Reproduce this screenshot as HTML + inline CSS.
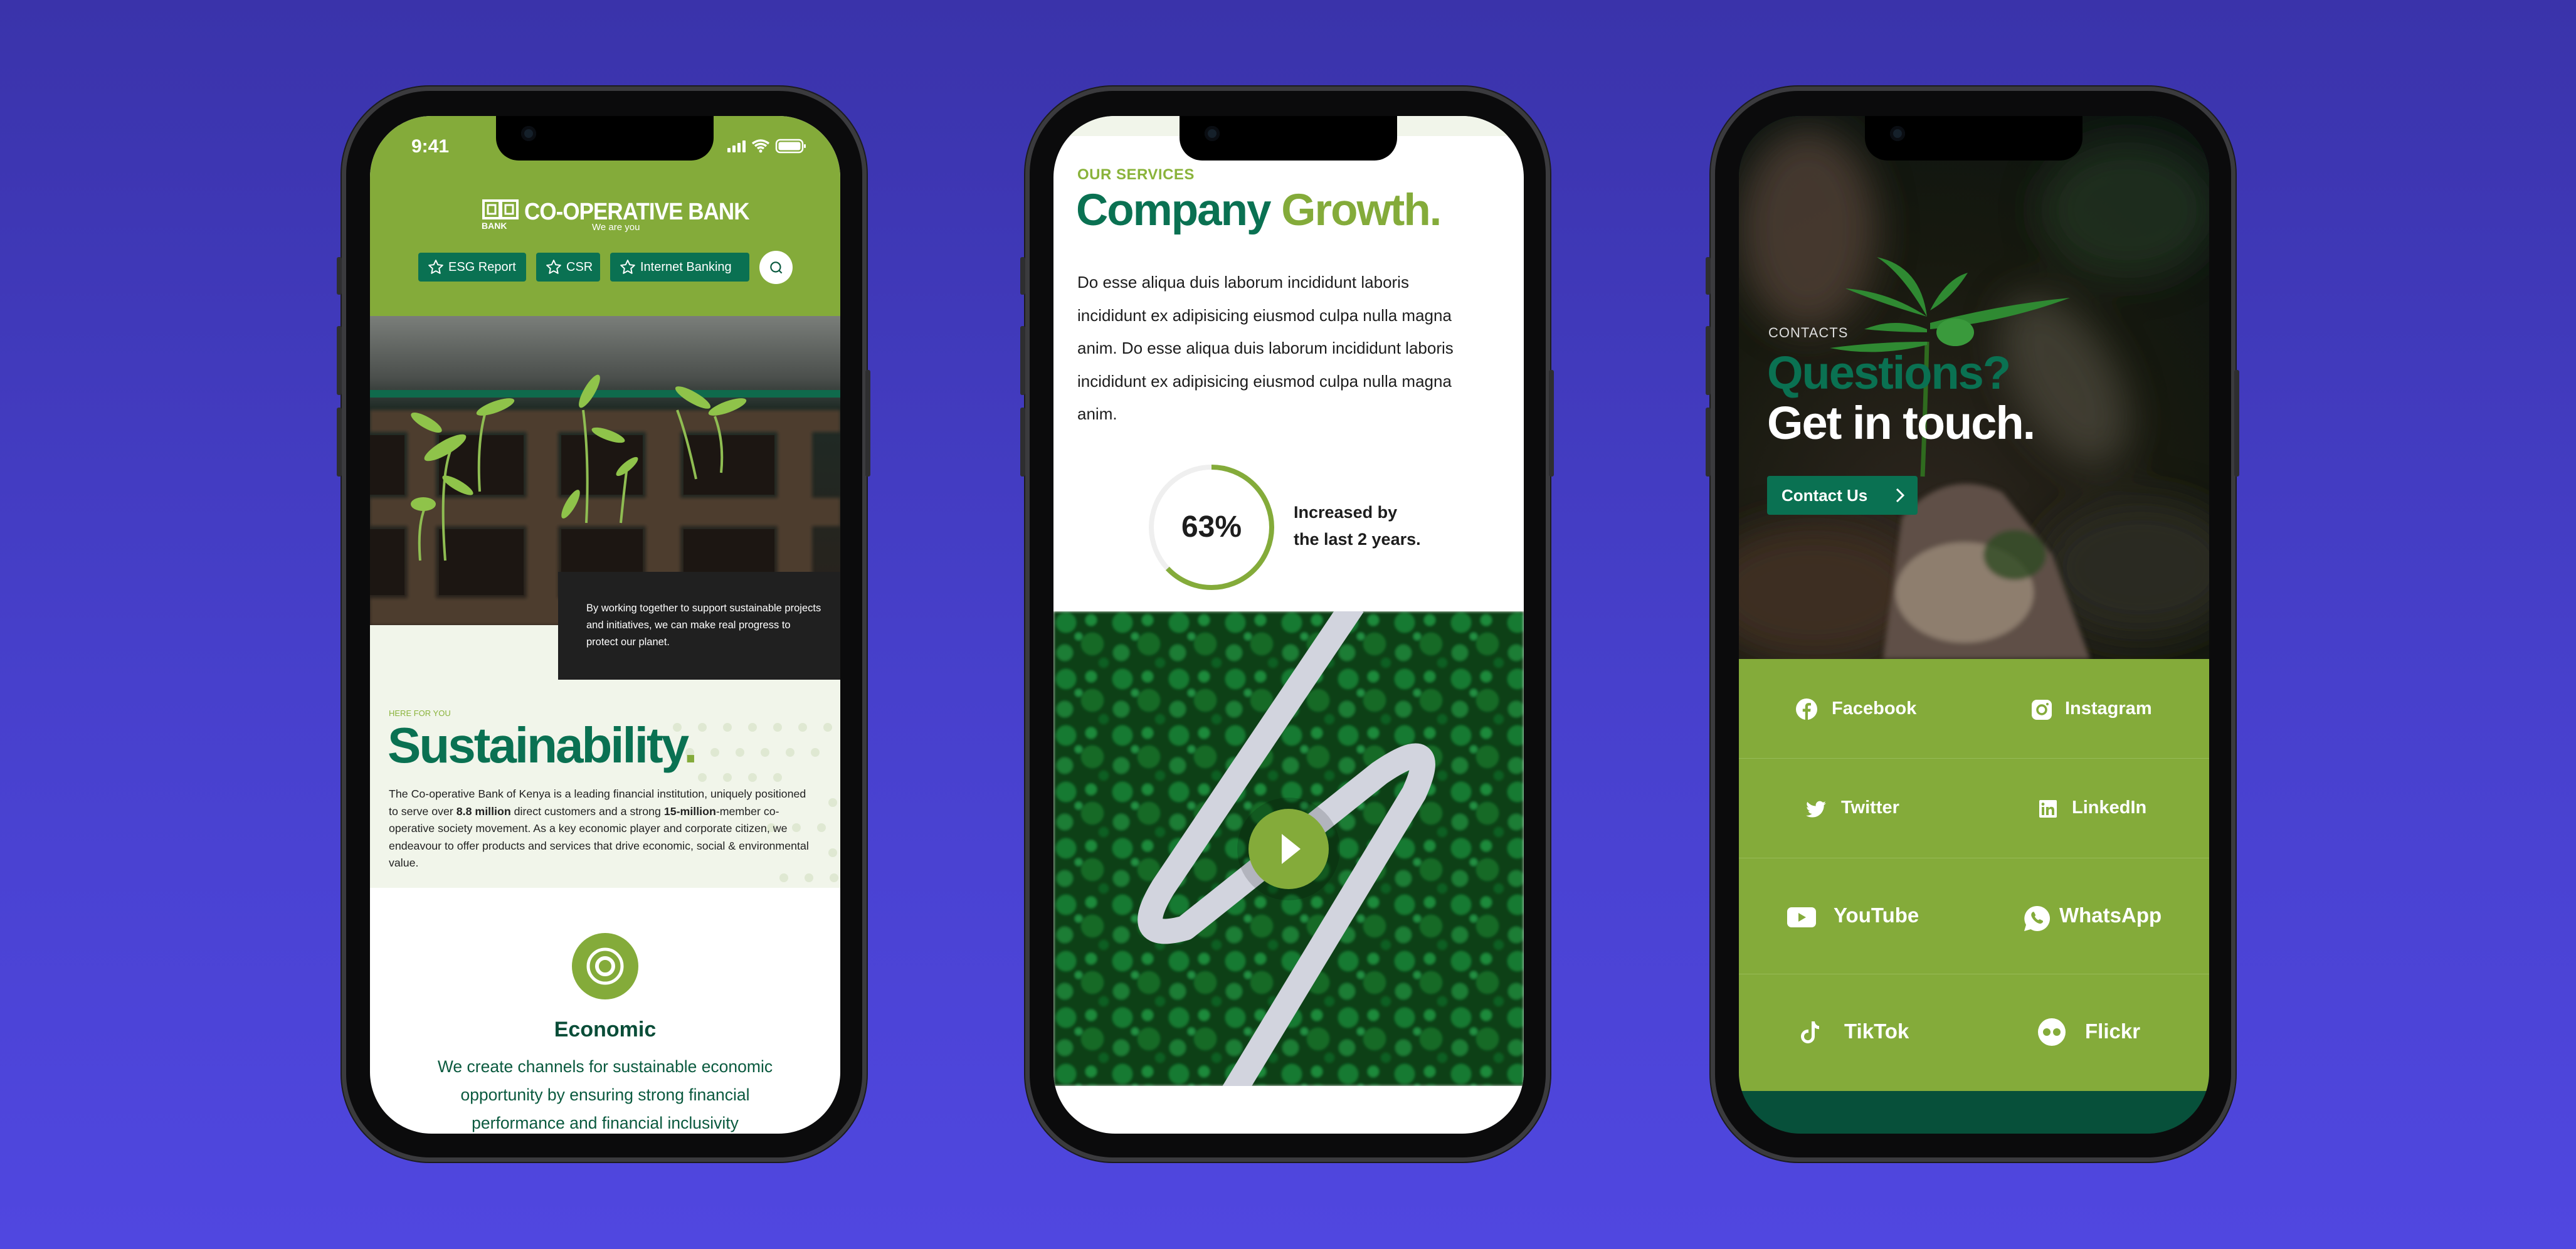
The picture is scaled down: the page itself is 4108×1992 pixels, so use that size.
<!DOCTYPE html>
<html><head><meta charset="utf-8"><style>
*{margin:0;padding:0;box-sizing:border-box}
body{width:4108px;height:1992px;overflow:hidden;background:linear-gradient(180deg,#3a33aa 0%,#4740cc 55%,#5047e0 100%);font-family:"Liberation Sans",sans-serif;position:relative}
.phone{position:absolute;top:138px;width:837px;height:1715px;border-radius:140px;background:#0b0b0c;border:7px solid #3b3b3e;box-shadow:0 0 0 2px #1c1c1e}
.btn-side{position:absolute;background:#2e2e30;width:8px;border-radius:3px}
.screen{position:absolute;left:38px;top:40px;width:750px;height:1623px;border-radius:98px;overflow:hidden;background:#fff}
.notch{position:absolute;left:201px;top:0;width:347px;height:71px;background:#000;border-radius:0 0 36px 36px;z-index:10}
.cam{position:absolute;left:40px;top:16px;width:24px;height:24px;border-radius:50%;background:#15202a;box-shadow:inset 0 0 0 5px #0a0d12}
.abs{position:absolute}
</style></head><body>

<!-- PHONE 1 -->
<div class="phone" style="left:545px">
<div class="screen">
 <div class="abs" style="left:0;top:0;width:750px;height:319px;background:#84ab3a"></div>
 <div class="notch"><div class="cam"></div></div>
 <div class="abs" style="left:66px;top:32px;color:#fff;font-weight:bold;font-size:30px">9:41</div>
 <svg class="abs" style="left:568px;top:34px" width="130" height="28" viewBox="0 0 130 28">
  <rect x="2" y="17" width="5" height="7" rx="1" fill="#fff"/><rect x="10" y="13" width="5" height="11" rx="1" fill="#fff"/><rect x="18" y="9" width="5" height="15" rx="1" fill="#fff"/><rect x="26" y="5" width="5" height="19" rx="1" fill="#fff"/>
  <path d="M42 10 Q55 0 68 10 M46 14 Q55 7 64 14 M50 18 Q55 14 60 18" stroke="#fff" stroke-width="3.5" fill="none"/><circle cx="55" cy="22" r="2.5" fill="#fff"/>
  <rect x="80" y="4" width="42" height="20" rx="6" fill="none" stroke="#fff" stroke-width="2.5"/><rect x="83.5" y="7.5" width="35" height="13" rx="3" fill="#fff"/><rect x="124" y="11" width="3" height="6" rx="1" fill="#fff"/>
 </svg>
 <svg class="abs" style="left:178px;top:132px" width="62" height="50" viewBox="0 0 62 50">
  <rect x="3" y="3" width="26" height="28" fill="none" stroke="#fff" stroke-width="4"/><rect x="31" y="3" width="26" height="28" fill="none" stroke="#fff" stroke-width="4"/>
  <rect x="10" y="10" width="12" height="14" fill="none" stroke="#fff" stroke-width="3"/><rect x="38" y="10" width="12" height="14" fill="none" stroke="#fff" stroke-width="3"/>
  <text x="0" y="48" font-size="14" font-weight="bold" fill="#fff" font-family="Liberation Sans">BANK</text>
 </svg>
 <div class="abs" style="left:246px;top:132px;color:#fff;font-size:38px;letter-spacing:-1px;font-weight:bold;transform:scaleX(0.92);transform-origin:left">CO-OPERATIVE BANK</div>
 <div class="abs" style="left:354px;top:169px;color:#fff;font-size:15px">We are you</div>
 <div class="abs" style="left:77px;top:218px;width:172px;height:46px;background:#0a7152;border-radius:4px;color:#fff;font-size:20px;line-height:46px;padding-left:48px">ESG Report</div>
 <div class="abs" style="left:265px;top:218px;width:102px;height:46px;background:#0a7152;border-radius:4px;color:#fff;font-size:20px;line-height:46px;padding-left:48px">CSR</div>
 <div class="abs" style="left:383px;top:218px;width:222px;height:46px;background:#0a7152;border-radius:4px;color:#fff;font-size:20px;line-height:46px;padding-left:48px">Internet Banking</div>
 <svg class="abs" style="left:92px;top:228px" width="26" height="26" viewBox="0 0 24 24"><path d="M12 2l3 6.5 7 .8-5.2 4.8 1.4 7L12 17.6 5.8 21.1l1.4-7L2 9.3l7-.8z" fill="none" stroke="#fff" stroke-width="1.8" stroke-linejoin="round"/></svg>
 <svg class="abs" style="left:280px;top:228px" width="26" height="26" viewBox="0 0 24 24"><path d="M12 2l3 6.5 7 .8-5.2 4.8 1.4 7L12 17.6 5.8 21.1l1.4-7L2 9.3l7-.8z" fill="none" stroke="#fff" stroke-width="1.8" stroke-linejoin="round"/></svg>
 <svg class="abs" style="left:398px;top:228px" width="26" height="26" viewBox="0 0 24 24"><path d="M12 2l3 6.5 7 .8-5.2 4.8 1.4 7L12 17.6 5.8 21.1l1.4-7L2 9.3l7-.8z" fill="none" stroke="#fff" stroke-width="1.8" stroke-linejoin="round"/></svg>
 <div class="abs" style="left:621px;top:215px;width:53px;height:53px;border-radius:50%;background:#fff"></div>
 <svg class="abs" style="left:635px;top:229px" width="26" height="26" viewBox="0 0 24 24"><circle cx="11" cy="11" r="7" fill="none" stroke="#0a5a40" stroke-width="2"/><path d="M16 16l4 4" stroke="#0a5a40" stroke-width="2"/></svg>
 <svg class="abs" style="left:0;top:319px" width="750" height="493" viewBox="0 0 750 493">
  <defs>
   <linearGradient id="sg" x1="0" y1="0" x2="0" y2="1"><stop offset="0" stop-color="#7a7e7a"/><stop offset="0.2" stop-color="#4b4f4c"/><stop offset="0.3" stop-color="#1e2a25"/><stop offset="1" stop-color="#2a211b"/></linearGradient>
   <filter id="bl"><feGaussianBlur stdDeviation="3"/></filter>
  </defs>
  <rect width="750" height="493" fill="url(#sg)"/>
  <rect x="0" y="118" width="750" height="12" fill="#0f6a4c"/>
  <g fill="#4e3c2e" filter="url(#bl)">
   <rect x="0" y="150" width="750" height="35"/><rect x="0" y="290" width="750" height="45"/><rect x="0" y="450" width="750" height="43"/>
   <rect x="60" y="150" width="45" height="343"/><rect x="250" y="150" width="50" height="343"/><rect x="440" y="150" width="55" height="343"/><rect x="650" y="150" width="55" height="343"/>
  </g>
  <g fill="#1c1612"><rect x="110" y="190" width="135" height="95"/><rect x="305" y="190" width="130" height="95"/><rect x="500" y="190" width="145" height="95"/><rect x="0" y="190" width="55" height="95"/><rect x="110" y="340" width="135" height="105"/><rect x="305" y="340" width="130" height="105"/><rect x="500" y="340" width="145" height="105"/><rect x="0" y="340" width="55" height="105"/></g>
  <g stroke="#8fbd52" stroke-width="4" fill="none"><path d="M120 390 Q110 260 130 210"/><path d="M175 280 Q170 200 185 150"/><path d="M345 330 Q350 230 340 150"/><path d="M520 260 Q505 190 490 150"/><path d="M400 330 Q405 280 410 240"/><path d="M560 250 Q565 200 550 160"/><path d="M80 390 Q75 330 90 300"/></g>
  <g fill="#8fc34a"><ellipse cx="120" cy="210" rx="38" ry="11" transform="rotate(-30 120 210)"/><ellipse cx="200" cy="145" rx="32" ry="9" transform="rotate(-20 200 145)"/><ellipse cx="90" cy="170" rx="28" ry="9" transform="rotate(30 90 170)"/><ellipse cx="350" cy="120" rx="30" ry="9" transform="rotate(-60 350 120)"/><ellipse cx="380" cy="190" rx="28" ry="8" transform="rotate(20 380 190)"/><ellipse cx="515" cy="130" rx="32" ry="9" transform="rotate(30 515 130)"/><ellipse cx="570" cy="145" rx="32" ry="9" transform="rotate(-20 570 145)"/><ellipse cx="410" cy="240" rx="22" ry="7" transform="rotate(-40 410 240)"/><ellipse cx="320" cy="300" rx="26" ry="8" transform="rotate(-60 320 300)"/><ellipse cx="85" cy="300" rx="20" ry="11"/><ellipse cx="140" cy="270" rx="28" ry="8" transform="rotate(30 140 270)"/></g>
 </svg>
 <div class="abs" style="left:0;top:812px;width:750px;height:419px;background:#f1f5ea"></div>
 <svg class="abs" style="left:420px;top:935px" width="330" height="300"><g fill="#dfe8d2">
  <circle cx="70" cy="40" r="7"/><circle cx="110" cy="40" r="7"/><circle cx="150" cy="40" r="7"/><circle cx="190" cy="40" r="7"/><circle cx="230" cy="40" r="7"/><circle cx="270" cy="40" r="7"/><circle cx="310" cy="40" r="7"/>
  <circle cx="90" cy="80" r="7"/><circle cx="130" cy="80" r="7"/><circle cx="170" cy="80" r="7"/><circle cx="210" cy="80" r="7"/><circle cx="250" cy="80" r="7"/><circle cx="290" cy="80" r="7"/>
  <circle cx="110" cy="120" r="7"/><circle cx="150" cy="120" r="7"/><circle cx="190" cy="120" r="7"/><circle cx="230" cy="120" r="7"/>
  <circle cx="318" cy="160" r="7"/><circle cx="220" cy="200" r="7"/><circle cx="260" cy="200" r="7"/><circle cx="300" cy="200" r="7"/><circle cx="318" cy="240" r="7"/><circle cx="240" cy="280" r="7"/><circle cx="280" cy="280" r="7"/><circle cx="320" cy="280" r="7"/></g></svg>
 <div class="abs" style="left:300px;top:727px;width:450px;height:172px;background:#202020"></div>
 <div class="abs" style="left:345px;top:772px;width:375px;color:#fff;font-size:16.5px;line-height:27px">By working together to support sustainable projects and initiatives, we can make real progress to protect our planet.</div>
 <div class="abs" style="left:30px;top:945px;color:#8ab33b;font-size:13px">HERE FOR YOU</div>
 <div class="abs" style="left:28px;top:958px;color:#0a7152;font-size:80px;font-weight:bold;letter-spacing:-3px">Sustainability<span style="color:#84ab3a">.</span></div>
 <div class="abs" style="left:30px;top:1068px;width:670px;color:#222;font-size:17.8px;line-height:27.5px">The Co-operative Bank of Kenya is a leading financial institution, uniquely positioned to serve over <b>8.8 million</b> direct customers and a strong <b>15-million</b>-member co-operative society movement. As a key economic player and corporate citizen, we endeavour to offer products and services that drive economic, social &amp; environmental value.</div>
 <svg class="abs" style="left:322px;top:1303px" width="106" height="106" viewBox="0 0 106 106"><circle cx="53" cy="53" r="53" fill="#84ab3a"/><circle cx="53" cy="53" r="27" fill="none" stroke="#fff" stroke-width="5"/><circle cx="53" cy="53" r="13" fill="none" stroke="#fff" stroke-width="6"/></svg>
 <div class="abs" style="left:0;top:1438px;width:750px;text-align:center;color:#0a4d38;font-size:34px;font-weight:bold">Economic</div>
 <div class="abs" style="left:95px;top:1494px;width:560px;text-align:center;color:#0b5a3f;font-size:26.5px;line-height:45px">We create channels for sustainable economic opportunity by ensuring strong financial performance and financial inclusivity</div>
</div></div>

<!-- PHONE 2 -->
<div class="phone" style="left:1635px">
<div class="screen">
 <div class="abs" style="left:0;top:0;width:750px;height:32px;background:#f1f5ea"></div>
 <div class="notch"><div class="cam"></div></div>
 <div class="abs" style="left:38px;top:80px;color:#8ab33b;font-size:24px;font-weight:bold;letter-spacing:0.5px">OUR SERVICES</div>
 <div class="abs" style="left:36px;top:110px;color:#0a7152;font-size:71px;font-weight:bold;letter-spacing:-2px">Company <span style="color:#84ab3a">Growth.</span></div>
 <div class="abs" style="left:38px;top:239px;width:630px;color:#1d1d1d;font-size:26px;line-height:52.5px">Do esse aliqua duis laborum incididunt laboris incididunt ex adipisicing eiusmod culpa nulla magna anim. Do esse aliqua duis laborum incididunt laboris incididunt ex adipisicing eiusmod culpa nulla magna anim.</div>
 <svg class="abs" style="left:148px;top:552px" width="208" height="208" viewBox="0 0 208 208">
  <circle cx="104" cy="104" r="96" fill="none" stroke="#efefef" stroke-width="8"/>
  <circle cx="104" cy="104" r="96" fill="none" stroke="#84ab3a" stroke-width="8" stroke-dasharray="380 603" transform="rotate(-90 104 104)"/>
 </svg>
 <div class="abs" style="left:148px;top:628px;width:208px;text-align:center;color:#1d1d1d;font-size:48px;font-weight:bold">63%</div>
 <div class="abs" style="left:383px;top:611px;color:#1d1d1d;font-size:27px;font-weight:bold;line-height:43px">Increased by<br>the last 2 years.</div>
 <svg class="abs" style="left:0;top:790px" width="750" height="757" viewBox="0 0 750 757">
  <defs>
   <pattern id="tr" width="90" height="90" patternUnits="userSpaceOnUse">
    <rect width="90" height="90" fill="#0a3f16"/>
    <circle cx="20" cy="18" r="16" fill="#187a30"/><circle cx="62" cy="52" r="18" fill="#126a28"/><circle cx="60" cy="14" r="9" fill="#1d8a3a"/><circle cx="18" cy="66" r="13" fill="#1a7d34"/><circle cx="80" cy="82" r="8" fill="#0f5e22"/><circle cx="40" cy="40" r="6" fill="#229042"/>
   </pattern>
   <filter id="b2"><feGaussianBlur stdDeviation="2"/></filter>
  </defs>
  <rect width="750" height="757" fill="url(#tr)" filter="url(#b2)"/>
  <path d="M478 -10 L175 440 Q120 530 210 505 L520 258 Q620 190 575 290 L285 770" fill="none" stroke="#d2d4de" stroke-width="40" stroke-linejoin="round"/>
  <circle cx="375" cy="379" r="82" fill="#000" opacity="0.15"/>
  <circle cx="375" cy="379" r="64" fill="#84ab3a"/>
  <path d="M364 355 L394 379 L364 403 Z" fill="#fff"/>
 </svg>
</div></div>

<!-- PHONE 3 -->
<div class="phone" style="left:2728px">
<div class="screen" style="background:#07503a">
 <svg class="abs" style="left:0;top:0" width="750" height="866" viewBox="0 0 750 866">
  <defs>
   <radialGradient id="bg3" cx="0.4" cy="0.8" r="0.9"><stop offset="0" stop-color="#2e261f"/><stop offset="0.6" stop-color="#17190f"/><stop offset="1" stop-color="#0d1410"/></radialGradient>
   <filter id="bb"><feGaussianBlur stdDeviation="30"/></filter>
   <filter id="bs"><feGaussianBlur stdDeviation="4"/></filter>
  </defs>
  <rect width="750" height="866" fill="url(#bg3)"/>
  <g filter="url(#bb)">
   <ellipse cx="110" cy="180" rx="110" ry="160" fill="#5a463a" opacity="0.7"/>
   <ellipse cx="620" cy="150" rx="140" ry="110" fill="#2a3a2a" opacity="0.6"/>
   <ellipse cx="520" cy="420" rx="80" ry="150" fill="#6a6458" opacity="0.45" transform="rotate(-30 520 420)"/>
   <ellipse cx="120" cy="760" rx="180" ry="110" fill="#3e2e22"/>
   <ellipse cx="640" cy="720" rx="160" ry="110" fill="#2a2a20"/>
  </g>
  <g filter="url(#bs)">
   <path d="M230 866 L260 640 Q330 560 420 600 L500 700 L560 866Z" fill="#5e5046"/>
   <ellipse cx="360" cy="760" rx="110" ry="80" fill="#9a8a78" opacity="0.8"/>
   <ellipse cx="440" cy="700" rx="50" ry="40" fill="#2f4a22" opacity="0.8"/>
  </g>
  <path d="M293 575 Q298 450 300 360" stroke="#2f6b1f" stroke-width="7" fill="none"/>
  <g fill="#2f8a32">
   <path d="M300 320 Q240 280 170 275 Q230 300 300 320Z"/>
   <path d="M300 320 Q260 250 220 225 Q290 240 300 320Z"/>
   <path d="M305 310 Q330 260 365 250 Q340 290 305 310Z"/>
   <path d="M305 330 Q420 300 528 290 Q420 330 305 340Z"/>
   <path d="M300 340 Q250 320 200 340 Q250 345 300 345Z"/>
   <path d="M300 360 Q220 360 145 370 Q220 385 300 365Z"/>
   <ellipse cx="345" cy="345" rx="30" ry="22" fill="#3a9a3c"/>
  </g>
 </svg>
 <div class="notch"><div class="cam"></div></div>
 <div class="abs" style="left:47px;top:333px;color:#ddd;font-size:22px;letter-spacing:1px">CONTACTS</div>
 <div class="abs" style="left:45px;top:370px;color:#0a7152;font-size:74px;font-weight:bold;letter-spacing:-2px;line-height:80px">Questions?</div>
 <div class="abs" style="left:45px;top:450px;color:#fff;font-size:74px;font-weight:bold;letter-spacing:-2px;line-height:80px">Get in touch.</div>
 <div class="abs" style="left:45px;top:574px;width:240px;height:62px;background:#0a7152;border-radius:4px;color:#fff;font-size:26px;font-weight:bold;line-height:62px;padding-left:23px">Contact Us</div>
 <svg class="abs" style="left:246px;top:592px" width="22" height="26" viewBox="0 0 22 26"><path d="M6 3l10 10-10 10" stroke="#fff" stroke-width="3" fill="none"/></svg>
 <div class="abs" style="left:0;top:866px;width:750px;height:689px;background:#84ab3a"></div>
 <div class="abs" style="left:0;top:1024px;width:750px;height:1px;background:#97bb58"></div>
 <div class="abs" style="left:0;top:1183px;width:750px;height:1px;background:#97bb58"></div>
 <div class="abs" style="left:0;top:1368px;width:750px;height:1px;background:#97bb58"></div>
 <div style="position:absolute;left:0;top:0;color:#fff;font-weight:bold">
  <div class="abs" style="left:148px;top:929px;font-size:29px">Facebook</div>
  <div class="abs" style="left:520px;top:929px;font-size:29px">Instagram</div>
  <div class="abs" style="left:163px;top:1087px;font-size:29px">Twitter</div>
  <div class="abs" style="left:531px;top:1087px;font-size:29px">LinkedIn</div>
  <div class="abs" style="left:151px;top:1256px;font-size:33px">YouTube</div>
  <div class="abs" style="left:511px;top:1256px;font-size:33px">WhatsApp</div>
  <div class="abs" style="left:168px;top:1441px;font-size:33px">TikTok</div>
  <div class="abs" style="left:552px;top:1441px;font-size:33px">Flickr</div>
 </div>
 <svg class="abs" style="left:90px;top:928px" width="36" height="36" viewBox="0 0 36 36"><circle cx="18" cy="18" r="17" fill="#fff"/><path d="M20 36V22h4l.6-4.5H20v-3c0-1.3.4-2.2 2.2-2.2H25V8.3c-.5-.1-2-.2-3.6-.2-3.6 0-5.6 2.2-5.6 6v3.4h-4V22h4v14z" fill="#84ab3a"/></svg>
 <svg class="abs" style="left:466px;top:930px" width="34" height="34" viewBox="0 0 34 34"><rect x="1" y="1" width="32" height="32" rx="8" fill="#fff"/><circle cx="17" cy="17" r="7" fill="none" stroke="#84ab3a" stroke-width="3.5"/><circle cx="26" cy="8" r="2" fill="#84ab3a"/></svg>
 <svg class="abs" style="left:107px;top:1092px" width="32" height="28" viewBox="0 0 24 20"><path d="M24 2.3a10 10 0 0 1-2.8.8A5 5 0 0 0 23.3.4a10 10 0 0 1-3.1 1.2A4.9 4.9 0 0 0 11.8 6 14 14 0 0 1 1.7.9a4.9 4.9 0 0 0 1.5 6.6A4.9 4.9 0 0 1 1 6.9a4.9 4.9 0 0 0 3.9 4.8 5 5 0 0 1-2.2.1 4.9 4.9 0 0 0 4.6 3.4A9.9 9.9 0 0 1 0 17.2 14 14 0 0 0 7.5 19.4c9.1 0 14-7.5 14-14v-.6A10 10 0 0 0 24 2.3z" fill="#fff"/></svg>
 <svg class="abs" style="left:478px;top:1090px" width="30" height="30" viewBox="0 0 30 30"><rect x="1" y="1" width="28" height="28" rx="2" fill="#fff"/><rect x="5" y="12" width="4" height="13" fill="#84ab3a"/><circle cx="7" cy="7.5" r="2.4" fill="#84ab3a"/><path d="M12 12h4v2c1-1.6 2.5-2.3 4.3-2.3 3 0 4.7 1.8 4.7 5.5V25h-4v-7c0-1.8-.7-2.8-2.2-2.8S16 16.3 16 18v7h-4z" fill="#84ab3a"/></svg>
 <svg class="abs" style="left:77px;top:1262px" width="46" height="32" viewBox="0 0 46 32"><rect x="0" y="0" width="46" height="32" rx="7" fill="#fff"/><path d="M18 9l12 7-12 7z" fill="#84ab3a"/></svg>
 <svg class="abs" style="left:453px;top:1258px" width="44" height="44" viewBox="0 0 44 44"><path d="M22 2a20 20 0 0 0-17 30L2 42l10.5-3A20 20 0 1 0 22 2z" fill="#fff"/><path d="M15 12c1-1 2.5-1 3 0l2 4c.4 1-.5 2-1.2 2.7 1.2 2.5 3.3 4.6 5.8 5.8.7-.7 1.600-1.6 2.7-1.2l4 2c1 .5 1 2 0 3-2 2.2-4.6 2.4-8 .6-3.5-1.8-7-5.3-8.8-8.8-1.8-3.4-1.6-6 .5-8.1z" fill="#84ab3a"/></svg>
 <svg class="abs" style="left:98px;top:1443px" width="34" height="38" viewBox="0 0 34 38"><path d="M18 1h5c.3 4 3 7 7 7.3v5c-2.6 0-5-.8-7-2.2V25a11 11 0 1 1-11-11h1v5.2a6 6 0 1 0 5 5.8z" fill="#fff"/></svg>
 <svg class="abs" style="left:477px;top:1439px" width="44" height="44" viewBox="0 0 44 44"><circle cx="22" cy="22" r="22" fill="#fff"/><circle cx="14" cy="22" r="6" fill="#84ab3a"/><circle cx="30" cy="22" r="6" fill="#84ab3a"/></svg>
</div></div>

<div class="btn-side" style="left:537px;top:410px;height:60px"></div>
<div class="btn-side" style="left:537px;top:520px;height:110px"></div>
<div class="btn-side" style="left:537px;top:650px;height:110px"></div>
<div class="btn-side" style="left:1380px;top:590px;height:170px"></div>
<div class="btn-side" style="left:1627px;top:410px;height:60px"></div>
<div class="btn-side" style="left:1627px;top:520px;height:110px"></div>
<div class="btn-side" style="left:1627px;top:650px;height:110px"></div>
<div class="btn-side" style="left:2470px;top:590px;height:170px"></div>
<div class="btn-side" style="left:2720px;top:410px;height:60px"></div>
<div class="btn-side" style="left:2720px;top:520px;height:110px"></div>
<div class="btn-side" style="left:2720px;top:650px;height:110px"></div>
<div class="btn-side" style="left:3563px;top:590px;height:170px"></div>
</body></html>
